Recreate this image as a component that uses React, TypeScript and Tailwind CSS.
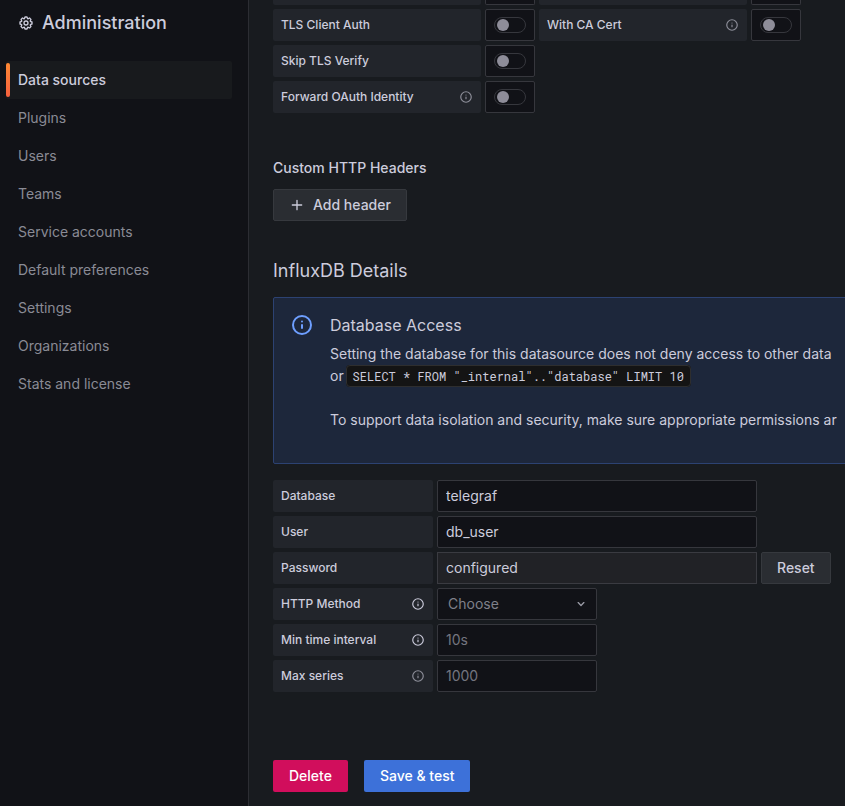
import { useState } from 'react';
import clsx from 'clsx';

const ICONS = {
  cog: 'M21.32,9.55l-1.89-.63.89-1.78A1,1,0,0,0,20.13,6L18,3.87a1,1,0,0,0-1.15-.19l-1.78.89-.63-1.89A1,1,0,0,0,13.5,2h-3a1,1,0,0,0-.95.68L8.92,4.57,7.14,3.68A1,1,0,0,0,6,3.87L3.87,6a1,1,0,0,0-.19,1.15l.89,1.78-1.89.63A1,1,0,0,0,2,10.5v3a1,1,0,0,0,.68.95l1.89.63-.89,1.78A1,1,0,0,0,3.87,18L6,20.13a1,1,0,0,0,1.15.19l1.78-.89.63,1.89a1,1,0,0,0,.95.68h3a1,1,0,0,0,.95-.68l.63-1.89,1.78.89A1,1,0,0,0,18,20.13L20.13,18a1,1,0,0,0,.19-1.15l-.89-1.78,1.89-.63A1,1,0,0,0,22,13.5v-3A1,1,0,0,0,21.32,9.55ZM20,12.78l-1.2.4A2,2,0,0,0,17.64,16l.57,1.14-1.1,1.1L16,17.64a2,2,0,0,0-2.79,1.16l-.4,1.2H11.22l-.4-1.2A2,2,0,0,0,8,17.64l-1.14.57-1.1-1.1L6.36,16A2,2,0,0,0,5.2,13.18L4,12.78V11.22l1.2-.4A2,2,0,0,0,6.36,8L5.79,6.89l1.1-1.1L8,6.36A2,2,0,0,0,10.82,5.2l.4-1.2h1.56l.4,1.2A2,2,0,0,0,16,6.36l1.14-.57,1.1,1.1L17.64,8a2,2,0,0,0,1.16,2.79l1.2.4ZM12,8a4,4,0,1,0,4,4A4,4,0,0,0,12,8Zm0,6a2,2,0,1,1,2-2A2,2,0,0,1,12,14Z',
  info: 'M12,2A10,10,0,1,0,22,12,10.01,10.01,0,0,0,12,2Zm0,18a8,8,0,1,1,8-8A8.01,8.01,0,0,1,12,20Zm0-9a1,1,0,0,0-1,1v3a1,1,0,0,0,2,0V12A1,1,0,0,0,12,11Zm0-3.5a1,1,0,1,0,1,1A1,1,0,0,0,12,7.5Z',
  plus: 'M19,11H13V5a1,1,0,0,0-2,0v6H5a1,1,0,0,0,0,2h6v6a1,1,0,0,0,2,0V13h6a1,1,0,0,0,0-2Z',
  angleDown: 'M17,9.17a1,1,0,0,0-1.41,0L12,12.71,8.46,9.17a1,1,0,0,0-1.41,0,1,1,0,0,0,0,1.42l4.24,4.24a1,1,0,0,0,1.42,0L17,10.59A1,1,0,0,0,17,9.17Z',
};

const navItems = [
  'Data sources',
  'Plugins',
  'Users',
  'Teams',
  'Service accounts',
  'Default preferences',
  'Settings',
  'Organizations',
  'Stats and license',
];

const inputClass =
  'h-8 rounded-xs border border-[#36373d] bg-[#111217] px-2 pb-0.5 text-sm text-[#ccccdc] placeholder:text-[#74757f] outline-none';

const secondaryButton =
  'flex h-8 shrink-0 items-center gap-2 rounded-xs border border-[#36393e] bg-[#2a2d32] px-[15px] text-sm font-medium text-[#ccccdc]';

function Icon({ name, className }: { name: keyof typeof ICONS; className?: string }) {
  return (
    <svg viewBox="0 0 24 24" fill="currentColor" aria-hidden="true" className={clsx('shrink-0', className)}>
      <path d={ICONS[name]} />
    </svg>
  );
}

interface FieldLabelProps {
  id: string;
  text: string;
  wide?: boolean;
  info?: 'dim' | 'bright';
}

function FieldLabel({ id, text, wide, info }: FieldLabelProps) {
  return (
    <label
      htmlFor={id}
      className={clsx(
        'flex h-8 shrink-0 items-center justify-between rounded-xs bg-[#22252b] px-2 text-xs font-medium text-[#ccccdc]',
        wide ? 'w-52' : 'w-40'
      )}
    >
      {text}
      {info && (
        <Icon name="info" className={clsx('size-3.5', info === 'bright' ? 'text-[#ccccdc]' : 'text-[#8e8f9a]')} />
      )}
    </label>
  );
}

function SwitchField({ id, text, info }: { id: string; text: string; info?: 'dim' | 'bright' }) {
  const [checked, setChecked] = useState(false);

  return (
    <div className="flex shrink-0 gap-1">
      <FieldLabel id={id} text={text} info={info} wide />
      <div className="flex h-8 w-[50px] items-center justify-center rounded-xs border border-[#36373d] bg-[#111217]">
        <input
          id={id}
          type="checkbox"
          role="switch"
          checked={checked}
          onChange={(e) => setChecked(e.target.checked)}
          className="flex h-4 w-8 appearance-none items-center rounded-full border border-[#36373d] px-0.5 before:size-3 before:rounded-full before:bg-[#8e8d99] checked:justify-end checked:bg-[#3d71d9]"
        />
      </div>
    </div>
  );
}

// Lower edge of the row that is scrolled out of view
function ScrolledRow() {
  return (
    <div className="flex h-[5px] gap-1" aria-hidden="true">
      <div className="w-52 shrink-0 rounded-b-xs bg-[#22252b]" />
      <div className="w-[50px] shrink-0 rounded-b-xs border border-t-0 border-[#36373d] bg-[#111217]" />
      <div className="w-52 shrink-0 rounded-b-xs bg-[#22252b]" />
      <div className="w-[50px] shrink-0 rounded-b-xs border border-t-0 border-[#36373d] bg-[#111217]" />
    </div>
  );
}

function Sidebar() {
  return (
    <aside className="w-[249px] shrink-0 border-r border-[#2c2d33] bg-[#111217]">
      <h1 className="flex h-[46px] items-center gap-2 pl-[18px] text-lg font-medium">
        <Icon name="cog" className="size-4" />
        Administration
      </h1>
      <nav className="mt-[15px] mr-4 ml-1.5">
        {navItems.map((item, i) => (
          <a
            key={item}
            href="#"
            aria-current={i === 0 ? 'page' : undefined}
            className={clsx(
              'relative flex h-[38px] items-center rounded-xs pl-3 text-sm',
              i === 0
                ? 'bg-[#181a1d] font-medium text-[#ccccdc] before:absolute before:inset-y-0.5 before:left-0 before:w-1 before:rounded-xs before:bg-linear-to-b before:from-[#ff8833] before:to-[#f55f3e]'
                : 'text-[#8a8b95]'
            )}
          >
            {item}
          </a>
        ))}
      </nav>
    </aside>
  );
}

export default function App() {
  const [database, setDatabase] = useState('telegraf');
  const [user, setUser] = useState('db_user');

  return (
    <div className="flex min-h-screen bg-[#181b1f] font-['Inter',sans-serif] text-[#ccccdc]">
      <Sidebar />
      <main className="min-w-0 flex-1 overflow-hidden pb-3.5 pl-6">
        <div className="flex flex-col gap-1">
          <ScrolledRow />
          <div className="flex gap-1">
            <SwitchField id="tls-client-auth" text="TLS Client Auth" />
            <SwitchField id="with-ca-cert" text="With CA Cert" info="dim" />
          </div>
          <SwitchField id="skip-tls-verify" text="Skip TLS Verify" />
          <SwitchField id="forward-oauth" text="Forward OAuth Identity" info="dim" />
        </div>

        <h2 className="mt-11 text-sm leading-[22px] font-medium">Custom HTTP Headers</h2>
        <button type="button" className={clsx(secondaryButton, 'mt-2.5')}>
          <Icon name="plus" className="size-4" />
          Add header
        </button>

        <h2 className="mt-[38px] text-lg leading-6">InfluxDB Details</h2>
        <section className="mt-3.5 -mr-1 flex gap-4 rounded-xs border border-[#2c4272] bg-[#1d273b] pt-[15px] pb-8 pl-4 whitespace-nowrap">
          <Icon name="info" className="size-6 text-[#6e9fff]" />
          <div className="text-sm leading-[22px]">
            <h3 className="text-base leading-6">Database Access</h3>
            <p className="mt-1.5">
              Setting the database for this datasource does not deny access to other data
              <br />
              or{' '}
              <code className="-ml-0.5 rounded-sm border border-[#2e2e2e] bg-[#141414] px-1.5 py-0.5 font-['Roboto_Mono','Liberation_Mono',monospace] text-xs">
                SELECT * FROM "_internal".."database" LIMIT 10
              </code>
            </p>
            <p className="mt-[22px]">
              To support data isolation and security, make sure appropriate permissions ar
            </p>
          </div>
        </section>

        <form className="mt-4" onSubmit={(e) => e.preventDefault()}>
          <div className="flex flex-col gap-1">
            <div className="flex gap-1">
              <FieldLabel id="database" text="Database" />
              <input
                id="database"
                value={database}
                onChange={(e) => setDatabase(e.target.value)}
                className={clsx(inputClass, 'w-80')}
              />
            </div>
            <div className="flex gap-1">
              <FieldLabel id="user" text="User" />
              <input
                id="user"
                value={user}
                onChange={(e) => setUser(e.target.value)}
                className={clsx(inputClass, 'w-80')}
              />
            </div>
            <div className="flex gap-1">
              <FieldLabel id="password" text="Password" />
              <input
                id="password"
                value="configured"
                disabled
                className="h-8 w-80 border border-[#3a3b41] bg-[#212226] px-2 pb-0.5 text-sm text-[#ccccdc]"
              />
              <button type="button" className={secondaryButton}>
                Reset
              </button>
            </div>
            <div className="flex gap-1">
              <FieldLabel id="http-method" text="HTTP Method" info="bright" />
              <div className="relative w-40">
                <select
                  id="http-method"
                  defaultValue=""
                  className="h-8 w-full appearance-none rounded-xs border border-[#36373d] bg-[#111217] px-2.5 text-sm text-[#7f808a] outline-none"
                >
                  <option value="">Choose</option>
                  <option value="GET">GET</option>
                  <option value="POST">POST</option>
                </select>
                <Icon
                  name="angleDown"
                  className="pointer-events-none absolute top-2 right-2 size-4 text-[#9a9ba6]"
                />
              </div>
            </div>
            <div className="flex gap-1">
              <FieldLabel id="min-interval" text="Min time interval" info="bright" />
              <input id="min-interval" placeholder="10s" className={clsx(inputClass, 'w-40')} />
            </div>
            <div className="flex gap-1">
              <FieldLabel id="max-series" text="Max series" info="dim" />
              <input id="max-series" placeholder="1000" className={clsx(inputClass, 'w-40')} />
            </div>
          </div>

          <div className="mt-[68px] flex gap-4">
            <button type="button" className="h-8 rounded-xs bg-[#d10e5c] px-4 text-sm font-medium text-white">
              Delete
            </button>
            <button type="submit" className="h-8 rounded-xs bg-[#3d71d9] px-4 text-sm font-medium text-white">
              Save &amp; test
            </button>
          </div>
        </form>
      </main>
    </div>
  );
}
